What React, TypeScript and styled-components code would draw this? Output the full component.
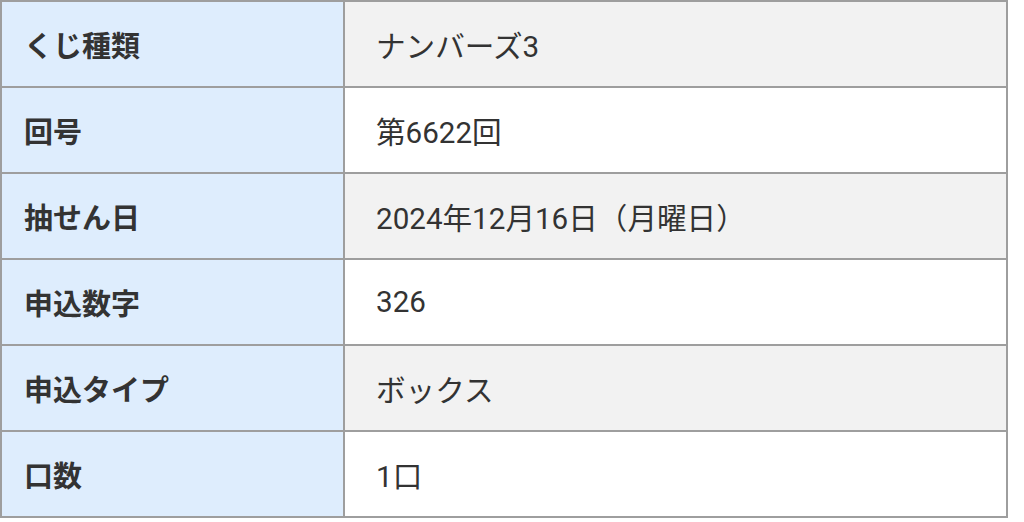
import styled, { createGlobalStyle } from "styled-components";

const GlobalStyle = createGlobalStyle`
  html, body {
    margin: 0;
    padding: 0;
    background: #ffffff;
  }
  body {
    font-family: Roboto, "Noto Sans CJK JP", sans-serif;
  }
`;

type Row = { label: string; value: string };

const rows: Row[] = [
  { label: "くじ種類", value: "ナンバーズ3" },
  { label: "回号", value: "第6622回" },
  { label: "抽せん日", value: "2024年12月16日（月曜日）" },
  { label: "申込数字", value: "326" },
  { label: "申込タイプ", value: "ボックス" },
  { label: "口数", value: "1口" },
];

function App() {
  return (
    <>
      <GlobalStyle />
      <Table>
        {rows.map((row, i) => (
          <TableRow key={row.label}>
            <Label>{row.label}</Label>
            <Value $striped={i % 2 === 0}>{row.value}</Value>
          </TableRow>
        ))}
      </Table>
    </>
  );
}

const Table = styled.div`
  width: 1008px;
  box-sizing: border-box;
  display: grid;
  grid-template-columns: 343px 1fr;
  border-top: 2px solid #9e9e9e;
  border-left: 2px solid #9e9e9e;
`;

const TableRow = styled.div`
  display: contents;
`;

const Cell = styled.div`
  height: 86px;
  box-sizing: border-box;
  display: flex;
  align-items: center;
  border-right: 2px solid #9e9e9e;
  border-bottom: 2px solid #9e9e9e;
  font-size: 29px;
  color: #333333;
  white-space: nowrap;
`;

const Label = styled(Cell)`
  background: #deedfd;
  padding-left: 22px;
  font-weight: 700;
`;

const Value = styled(Cell)<{ $striped: boolean }>`
  background: ${(p) => (p.$striped ? "#f2f2f2" : "#ffffff")};
  padding-left: 31px;
  font-size: 29.6px;
  font-weight: 400;
`;

export default App;
